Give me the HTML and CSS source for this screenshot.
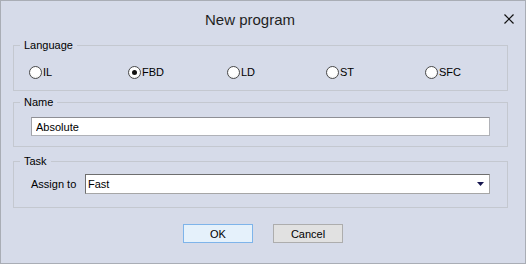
FILE: index.html
```html
<!DOCTYPE html>
<html lang="en">

<head>
  <meta charset="UTF-8">
  <title>New program</title>
  <link rel="stylesheet" href="styles.css">
</head>

<body>
  <div class="dialog">
    <header class="titlebar">
      <span></span>
      <h1>New program</h1>
      <button class="close" aria-label="Close">
        <svg viewBox="0 0 11 10" width="11" height="10" fill="none" stroke="#111" stroke-width="1.2">
          <path d="M0.5 0.5 9.5 9.5" />
          <path d="M9.5 0.5 0.5 9.5" />
        </svg>
      </button>
    </header>

    <fieldset class="group">
      <legend>Language</legend>
      <div class="radios">
        <label class="radio"><span class="dot"></span>IL</label>
        <label class="radio"><span class="dot checked"></span>FBD</label>
        <label class="radio"><span class="dot"></span>LD</label>
        <label class="radio"><span class="dot"></span>ST</label>
        <label class="radio"><span class="dot"></span>SFC</label>
      </div>
    </fieldset>

    <fieldset class="group name">
      <legend>Name</legend>
      <div class="field-wrap">
        <input class="field" value="Absolute">
      </div>
    </fieldset>

    <fieldset class="group task">
      <legend>Task</legend>
      <div class="row">
        <label class="row-label">Assign to</label>
        <div class="select">
          <span>Fast</span>
          <svg viewBox="0 0 7 4" width="7" height="4">
            <path d="M0 0h7L3.5 4z" fill="#16164f" />
          </svg>
        </div>
      </div>
    </fieldset>

    <div class="actions">
      <button class="btn default">OK</button>
      <button class="btn">Cancel</button>
    </div>
  </div>
</body>

</html>
```

FILE: styles.css
```css
body {
  margin: 0;
  font-family: "Liberation Sans", Arial, sans-serif;
  font-size: 11px;
  color: #000;
}

.dialog {
  box-sizing: border-box;
  width: 526px;
  height: 264px;
  border: 1px solid #a9adb5;
  background: #d6dbe9;
  display: flex;
  flex-direction: column;
}

.titlebar {
  height: 36px;
  display: grid;
  grid-template-columns: 1fr auto 1fr;
  align-items: center;
}

h1 {
  margin: 0;
  padding-right: 26px;
  font-size: 15px;
  font-weight: 400;
  color: #1f1f1f;
}

.close {
  justify-self: end;
  margin-right: 10px;
  padding: 0;
  border: 0;
  background: none;
  display: flex;
}

.group {
  margin: 0 17px 0 12px;
  padding: 0;
  border: 1px solid #c4c8d0;
  min-inline-size: 0;
}

legend {
  margin-left: 6px;
  padding: 0 4px;
  line-height: 16px;
}

.radios {
  display: grid;
  grid-template-columns: repeat(5, 99px);
  padding: 12px 0 11px 15px;
}

.radio {
  display: flex;
  align-items: center;
  gap: 1px;
  height: 14px;
}

.dot {
  box-sizing: border-box;
  width: 13px;
  height: 13px;
  border: 1px solid #4a4a4a;
  border-radius: 50%;
  background: radial-gradient(circle at 50% 40%, #fff 50%, #e6e6e6);
  display: grid;
  place-items: center;
}

.dot.checked::after {
  content: "";
  width: 5px;
  height: 5px;
  border-radius: 50%;
  background: #111;
}

.name {
  margin-top: 3px;
}

.field-wrap {
  padding: 7px 17px 10px;
}

.field {
  box-sizing: border-box;
  display: block;
  width: 100%;
  height: 19px;
  padding: 0 4px;
  font: inherit;
  border: 1px solid;
  border-color: #8e8f95 #b0b2b8 #b0b2b8 #a0a2a8;
  background: #fff;
}

.task {
  margin-top: 6px;
}

.row {
  display: flex;
  align-items: center;
  padding: 5px 17px 13px;
}

.row-label {
  width: 54px;
  flex: none;
}

.select {
  box-sizing: border-box;
  flex: 1;
  height: 20px;
  display: flex;
  align-items: center;
  justify-content: space-between;
  padding: 0 5px 0 2px;
  background: #fff;
  border: 1px solid;
  border-color: #6e6e6e #a6a6a6 #a6a6a6 #6e6e6e;
}

.actions {
  display: flex;
  justify-content: center;
  gap: 20px;
  margin-top: 16px;
}

.btn {
  box-sizing: border-box;
  width: 70px;
  height: 19px;
  padding: 0;
  font: inherit;
  color: #000;
  background: #e1e1e1;
  border: 1px solid #adadad;
}

.btn.default {
  background: #e5f1fb;
  border-color: #7eb4ea;
}
```
